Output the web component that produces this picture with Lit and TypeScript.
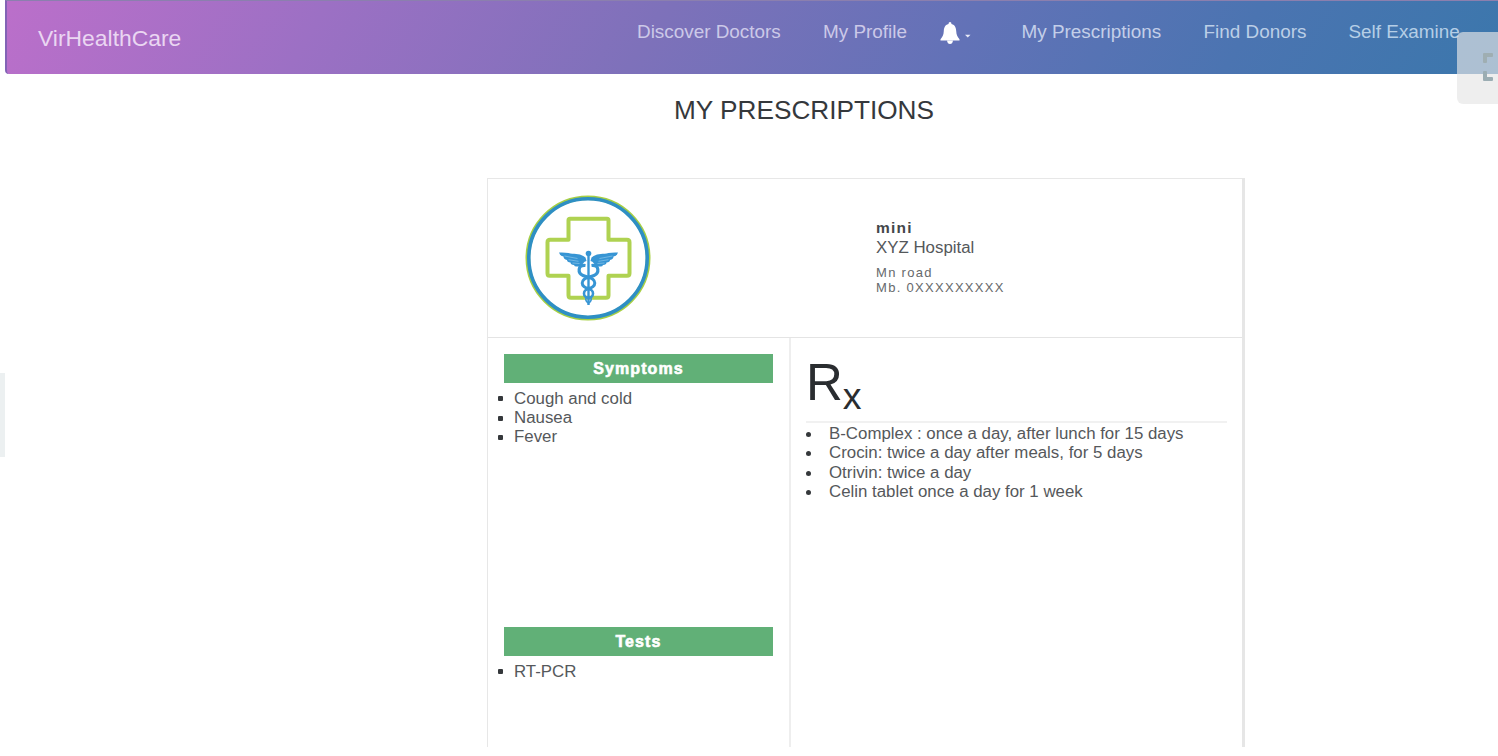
import { LitElement, html, css, svg } from "lit";
import { customElement, property } from "lit/decorators.js";

@customElement("clinic-logo")
class ClinicLogo extends LitElement {
  static styles = css`
    :host { display: block; width: 128px; height: 128px; }
    svg { display: block; }
  `;
  render() {
    const wing = svg`
      <path d="M-3 -3.500 C-8 -8 -14 -6.500 -20 -8 Q-24 -8.800 -29.500 -8.500 Q-28.500 -5 -25 -4.500 Q-25 -2 -21.500 -1 Q-21.500 1 -18 1.500 Q-18 3.800 -14.500 4 Q-14 6 -11 5.500 Q-7 6 -5.500 2.500 Q-4 0 -2 0 Z" fill="#3795d4"/>
      <path d="M-24 -5 L-11 -2.500 M-20 -1.300 L-10 .3 M-16 2 L-9 2.500" stroke="#8cc5ea" stroke-width=".7" fill="none"/>`;
    return html`<svg width="128" height="128" viewBox="0 0 128 128">
      <circle cx="64" cy="64" r="60.200" fill="#fff" stroke="#a6cf45" stroke-width="4.600" />
      <circle cx="64" cy="64" r="59.200" fill="none" stroke="#2e8fc4" stroke-width="3.600" />
      <path transform="translate(0 -1.700)" d="M46 26.500H83Q84.500 26.500 84.500 28V47.500H103Q105.500 47.500 105.500 50V81Q105.500 83.500 103 83.500H84.500V103Q84.500 105.500 82 105.500H47Q44.500 105.500 44.500 103V83.500H25.500Q23.500 83.500 23.500 81V50Q23.500 47.500 26 47.500H44.500V28Q44.500 26.500 46 26.500Z"
        fill="none" stroke="#afd251" stroke-width="4" stroke-linejoin="round" />
      <g transform="translate(64.500 67)">
        ${wing}<g transform="scale(-1 1)">${wing}</g>
        <circle cx="0" cy="-7.500" r="2.800" fill="#3795d4" />
        <path d="M0 -7V44" stroke="#3795d4" stroke-width="2.400" />
        <g fill="none" stroke="#3795d4">
          <path d="M-3 4.500C-11 3.500 -11 12 -5.500 14.500Q-2 16 0 16Q2 16 5.500 14.500C11 12 11 3.500 3 4.500" stroke-width="3.200" />
          <ellipse cx="0" cy="22" rx="6.300" ry="5.200" stroke-width="3" />
          <ellipse cx="0" cy="32.500" rx="4.500" ry="4.300" stroke-width="2.600" />
          <path d="M-2.500 37Q-3.500 40 0 42M2.500 37Q3.500 40 0 42" stroke-width="1.600" />
        </g>
      </g>
    </svg>`;
  }
}

@customElement("nav-bar")
class NavBar extends LitElement {
  static styles = css`
    :host { display: block; margin-left: 5px; }
    .bar {
      box-sizing: border-box; height: 73.500px; display: flex; align-items: flex-start;
      border-top: 1px solid #8b7fae; border-left: 2px solid #8263b5;
      border-radius: 0 0 0 4px; padding-left: 31px; white-space: nowrap;
      background: linear-gradient(120deg, #bb6fca 0%, #9c70c4 21%, #7e71ba 43%, #6272b7 64%, #4b74b1 82%, #3b77ac 100%);
    }
    .brand { font-size: 22.900px; line-height: 26px; margin-top: 24px; width: 599px; color: #ead6f2; }
    .link { font-size: 18.900px; line-height: 22px; margin-top: 20px; color: #ccc9e8; }
    .l1 { width: 186px; }
    .l2 { width: 117px; }
    .bell { display: flex; width: 81.500px; margin-top: 21px; }
    .l3 { width: 182px; color: #c3cfe9; }
    .l4 { width: 145px; color: #bccfe7; }
    .l5 { color: #b5cee6; }
  `;
  render() {
    return html`<nav class="bar">
      <span class="brand">VirHealthCare</span>
      <span class="link l1">Discover Doctors</span>
      <span class="link l2">My Profile</span>
      <span class="bell">
        <svg width="34" height="24" viewBox="0 0 34 24">
          <path d="M10 0Q11.500 0 11.500 2C15.200 3 16 5.800 16.200 9C16.400 13 17.500 15 19.500 17.200V18.500H.5V17.200C2.500 15 3.600 13 3.800 9C4 5.800 4.800 3 8.500 2Q8.500 0 10 0Z" fill="#fff" />
          <path d="M7 18.500H13Q12.500 22 10 22T7 18.500Z" fill="#fff" />
          <path d="M25 12.800H30.500L27.750 15.600Z" fill="#e9ebf8" />
        </svg>
      </span>
      <span class="link l3">My Prescriptions</span>
      <span class="link l4">Find Donors</span>
      <span class="link l5">Self Examine</span>
    </nav>`;
  }
}

@customElement("finding-list")
class FindingList extends LitElement {
  @property() heading = "";
  @property({ type: Array }) items: string[] = [];
  static styles = css`
    :host { display: block; height: 273px; }
    .title {
      margin: 0 16px 0 16px; height: 28.500px; line-height: 29px; text-align: center;
      background: #61b077; color: #fff; font-size: 16px; font-weight: 700; letter-spacing: 1.100px;
      -webkit-text-stroke: .6px #fff;
    }
    .list { margin: 6px 0 0; padding: 0; list-style: none; font-size: 16.850px; line-height: 19.400px; color: #55585b; }
    .item { display: flex; align-items: center; }
    .dot { width: 5px; height: 5px; margin: 1px 11px 0 10px; border-radius: 1px; background: #35383b; }
  `;
  render() {
    return html`<div class="title">${this.heading}</div>
      <ul class="list">${this.items.map((i) => html`<li class="item"><span class="dot"></span>${i}</li>`)}</ul>`;
  }
}

@customElement("prescription-card")
class PrescriptionCard extends LitElement {
  static styles = css`
    :host {
      box-sizing: border-box; display: flex; flex-direction: column; width: 758px; height: 569px; overflow: hidden;
      border: 1.500px solid #e7e7e7; border-right: 3px solid #e6e6e6; border-bottom: 0;
    }
    .head { box-sizing: border-box; flex: none; height: 159.500px; display: flex; border-bottom: 1px solid #e4e4e4; }
    .logo { margin: 15px 0 0 36px; width: 352px; }
    .doctor { color: #55585b; padding-top: 39px; white-space: nowrap; }
    .name { font-weight: 700; font-size: 15.500px; line-height: 20px; letter-spacing: 1.200px; color: #44474a; }
    .place { font-size: 16.850px; line-height: 19px; }
    .contact { margin-top: 8px; font-size: 13px; line-height: 15px; letter-spacing: 1.300px; color: #66696b; }
    .body { flex: 1; min-height: 0; display: flex; }
    .left { box-sizing: border-box; width: 303px; padding-top: 16px; border-right: 2px solid #eee; }
    .right { flex: 1; padding: 15px 15px 0 15px; }
    .rx { height: 68px; display: flex; align-items: flex-start; color: #2a2d30; border-bottom: 2px solid #f1f1f1; }
    .r { font-size: 51px; line-height: 60px; }
    .x { font-size: 37.500px; line-height: 43px; margin-top: 22px; }
    .meds { margin: 1px 0 0; padding: 0; list-style: none; font-size: 16.850px; line-height: 19.400px; color: #55585b; white-space: nowrap; }
    .med { display: flex; align-items: center; }
    .dot { width: 5px; height: 5px; margin: 1px 18px 0 0; border-radius: 50%; background: #35383b; }
  `;
  meds = [
    "B-Complex : once a day, after lunch for 15 days",
    "Crocin: twice a day after meals, for 5 days",
    "Otrivin: twice a day",
    "Celin tablet once a day for 1 week",
  ];
  render() {
    return html`
      <div class="head">
        <clinic-logo class="logo"></clinic-logo>
        <div class="doctor">
          <div class="name">mini</div>
          <div class="place">XYZ Hospital</div>
          <div class="contact">Mn road<br />Mb. 0XXXXXXXXX</div>
        </div>
      </div>
      <div class="body">
        <div class="left">
          <finding-list heading="Symptoms" .items=${["Cough and cold", "Nausea", "Fever"]}></finding-list>
          <finding-list heading="Tests" .items=${["RT-PCR"]}></finding-list>
        </div>
        <div class="right">
          <div class="rx"><span class="r">R</span><span class="x">x</span></div>
          <ul class="meds">${this.meds.map((m) => html`<li class="med"><span class="dot"></span>${m}</li>`)}</ul>
        </div>
      </div>`;
  }
}

@customElement("app-root")
class AppRoot extends LitElement {
  static styles = css`
    :host {
      display: block; position: relative; height: 756px; overflow: hidden; background: #fff;
      font-family: "Liberation Sans", Arial, sans-serif;
    }
    .title { margin: 21px 0 0 674px; font-size: 26.200px; line-height: 30px; font-weight: 400; color: #35383c; white-space: nowrap; }
    .card { margin: 53px 0 0 487px; }
    .expand {
      position: absolute; right: 0; top: 32px; width: 41px; height: 72px;
      border-radius: 6px 0 0 6px; background: rgba(230, 230, 230, .667);
    }
    .tab { position: absolute; left: 0; top: 373px; width: 5px; height: 84px; background: #ecf0f1; }
  `;
  render() {
    return html`
      <nav-bar></nav-bar>
      <h1 class="title">MY PRESCRIPTIONS</h1>
      <prescription-card class="card"></prescription-card>
      <div class="expand">
        <svg width="41" height="72" viewBox="0 0 41 72">
          <path d="M27 21H35Q36 21 36 22V24Q36 25 35 25H30V30Q30 31 29 31H27Q26 31 26 30V22Q26 21 27 21Z" fill="#9faeb2" />
          <path d="M27 39H29Q30 39 30 40V45H35Q36 45 36 46V48Q36 49 35 49H27Q26 49 26 48V40Q26 39 27 39Z" fill="#9badb3" />
        </svg>
      </div>
      <div class="tab"></div>`;
  }
}
